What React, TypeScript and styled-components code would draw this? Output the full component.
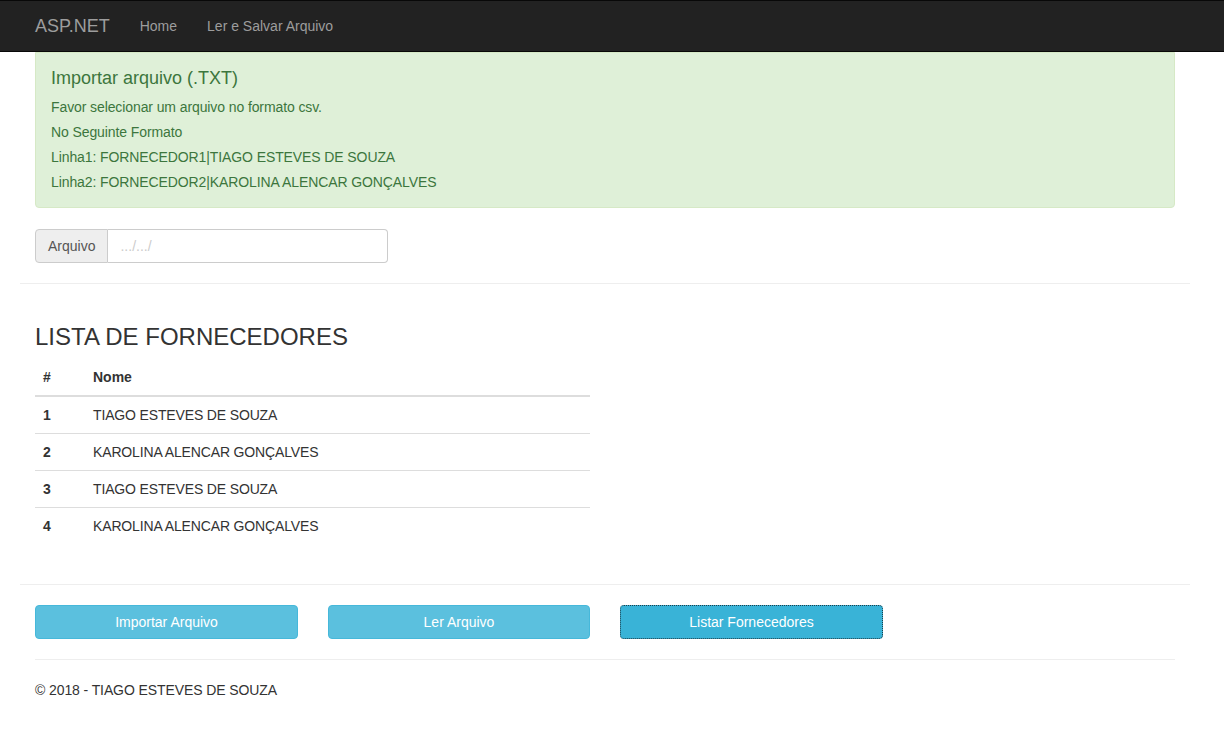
import React from "react";
import styled, { createGlobalStyle } from "styled-components";

const GlobalStyle = createGlobalStyle`
  body {
    margin: 0;
    font-family: "Liberation Sans", Arial, Helvetica, sans-serif;
    font-size: 14px;
    line-height: 20px;
    color: #333;
    background: #fff;
  }
  * {
    box-sizing: border-box;
  }
`;

const Navbar = styled.nav`
  height: 52px;
  background-color: #222;
  border-top: 1px solid #080808;
  border-bottom: 1px solid #080808;
`;
const NavInner = styled.div`
  width: 1170px;
  margin-left: 20px;
  padding: 0 15px;
  display: flex;
  align-items: center;
  height: 50px;
`;
const Brand = styled.a`
  font-size: 18px;
  color: #9d9d9d;
  text-decoration: none;
  margin-right: 15px;
`;
const NavLink = styled.a`
  color: #9d9d9d;
  text-decoration: none;
  padding: 0 15px;
`;

const Container = styled.div`
  width: 1170px;
  margin-left: 20px;
`;
const Section = styled.div`
  padding: 0 15px;
`;
const Rule = styled.hr<{ $top?: number; $bottom?: number }>`
  border: 0;
  border-top: 1px solid #eee;
  margin: ${(p) => p.$top ?? 20}px 0 ${(p) => p.$bottom ?? 20}px;
`;

const Alert = styled.div`
  background-color: #dff0d8;
  border: 1px solid #d6e9c6;
  color: #3c763d;
  border-radius: 0 0 4px 4px;
  padding: 15px;
  margin-bottom: 21px;
  letter-spacing: -0.1px;
`;
const AlertTitle = styled.h4`
  font-size: 18px;
  font-weight: 500;
  line-height: 20px;
  margin: 0 0 9px;
  letter-spacing: 0;
`;
const AlertLine = styled.p`
  margin: 0 0 5px;
  &:last-child {
    margin-bottom: 0;
  }
`;

const InputGroup = styled.div`
  display: flex;
  width: 353px;
  height: 34px;
`;
const Addon = styled.span`
  display: flex;
  align-items: center;
  padding: 0 12px;
  background-color: #eee;
  border: 1px solid #ccc;
  border-radius: 4px 0 0 4px;
  color: #555;
`;
const FileInput = styled.input`
  flex: 1;
  min-width: 0;
  border: 1px solid #ccc;
  border-left: 0;
  border-radius: 0 4px 4px 0;
  padding: 0 12px;
  font-family: inherit;
  font-size: 14px;
  color: #555;
  outline: none;
  &::placeholder {
    color: #ccc;
  }
`;

const Heading = styled.h3`
  font-size: 24px;
  font-weight: 500;
  line-height: 26px;
  margin: 40px 0 9px;
`;
const Table = styled.table`
  width: 555px;
  border-collapse: collapse;
  th,
  td {
    padding: 8px;
    text-align: left;
    line-height: 20px;
  }
  thead th {
    border-bottom: 2px solid #ddd;
  }
  tbody td {
    border-top: 1px solid #ddd;
    letter-spacing: -0.15px;
  }
  tbody tr:first-child td {
    border-top: 0;
  }
`;
const IdHead = styled.th`
  width: 50px;
`;
const IdCell = styled.td`
  font-weight: bold;
`;

const ButtonRow = styled.div`
  display: flex;
  gap: 30px;
`;
const Button = styled.button<{ $focused?: boolean; $w: number }>`
  width: ${(p) => p.$w}px;
  height: 34px;
  font-family: inherit;
  font-size: 14px;
  color: #fff;
  border-radius: 4px;
  background-color: ${(p) => (p.$focused ? "#39b3d7" : "#5bc0de")};
  border: 1px ${(p) => (p.$focused ? "dotted #1d3f4b" : "solid #46b8da")};
  cursor: pointer;
`;

const Footer = styled.footer`
  padding-bottom: 40px;
`;
const FooterText = styled.p`
  margin: 0;
  letter-spacing: -0.1px;
`;

const fornecedores = [
  "TIAGO ESTEVES DE SOUZA",
  "KAROLINA ALENCAR GONÇALVES",
  "TIAGO ESTEVES DE SOUZA",
  "KAROLINA ALENCAR GONÇALVES",
];

const App = () => {
  return (
    <>
      <GlobalStyle />
      <Navbar>
        <NavInner>
          <Brand href="#">ASP.NET</Brand>
          <NavLink href="#">Home</NavLink>
          <NavLink href="#">Ler e Salvar Arquivo</NavLink>
        </NavInner>
      </Navbar>
      <Container>
        <Section>
          <Alert>
            <AlertTitle>Importar arquivo (.TXT)</AlertTitle>
            <AlertLine>Favor selecionar um arquivo no formato csv.</AlertLine>
            <AlertLine>No Seguinte Formato</AlertLine>
            <AlertLine>Linha1: FORNECEDOR1|TIAGO ESTEVES DE SOUZA</AlertLine>
            <AlertLine>Linha2: FORNECEDOR2|KAROLINA ALENCAR GONÇALVES</AlertLine>
          </Alert>
          <InputGroup>
            <Addon>Arquivo</Addon>
            <FileInput placeholder=".../.../" />
          </InputGroup>
        </Section>
        <Rule />
        <Section>
          <Heading>LISTA DE FORNECEDORES</Heading>
          <Table>
            <thead>
              <tr>
                <IdHead>#</IdHead>
                <th>Nome</th>
              </tr>
            </thead>
            <tbody>
              {fornecedores.map((nome, i) => (
                <tr key={i}>
                  <IdCell>{i + 1}</IdCell>
                  <td>{nome}</td>
                </tr>
              ))}
            </tbody>
          </Table>
        </Section>
        <Rule $top={40} />
        <Section>
          <ButtonRow>
            <Button $w={263}>Importar Arquivo</Button>
            <Button $w={262}>Ler Arquivo</Button>
            <Button $w={263} $focused>
              Listar Fornecedores
            </Button>
          </ButtonRow>
          <Rule />
          <Footer>
            <FooterText>© 2018 - TIAGO ESTEVES DE SOUZA</FooterText>
          </Footer>
        </Section>
      </Container>
    </>
  );
};

export default App;
